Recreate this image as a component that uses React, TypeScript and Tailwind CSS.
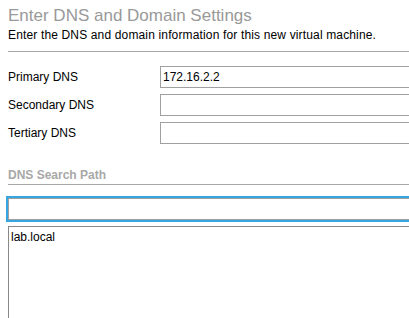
const rows = [
  { label: "Primary DNS", value: "172.16.2.2" },
  { label: "Secondary DNS", value: "" },
  { label: "Tertiary DNS", value: "" },
];

export default function App() {
  return (
    <main className="h-[318px] w-[409px] overflow-hidden bg-white pl-2 font-['Liberation_Sans',Arial,sans-serif] text-[12px] text-black">
      <div className="w-[440px]">
        <h1 className="pt-[6px] text-[17px] leading-[20px] text-[#999]">
          Enter DNS and Domain Settings
        </h1>
        <p className="mt-[2px] leading-[14px] tracking-[0.15px]">
          Enter the DNS and domain information for this new virtual machine.
        </p>
        <div className="mt-[9px] h-px bg-[#a8a8a8]" />

        <div className="mt-[14px] flex flex-col gap-[6px]">
          {rows.map((row) => (
            <div key={row.label} className="flex h-[22px] items-center">
              <span className="w-[152px] shrink-0">{row.label}</span>
              <div className="flex h-[22px] flex-1 items-center border border-[#a0a0a0] pl-[2px]">
                {row.value}
              </div>
            </div>
          ))}
        </div>

        <div className="mt-[24px] font-bold leading-[14px] text-[#a8a8a8]">
          DNS Search Path
        </div>
        <div className="mt-[2px] h-px bg-[#a8a8a8]" />

        <div className="-ml-[2px] mt-[11px] border-2 border-[#35a6df]">
          <div className="h-[22px] border border-[#a0a0a0]" />
        </div>

        <div className="mt-[4px] h-[120px] border border-[#888] pl-[2px] pt-[3px] leading-[14px]">
          lab.local
        </div>
      </div>
    </main>
  );
}
